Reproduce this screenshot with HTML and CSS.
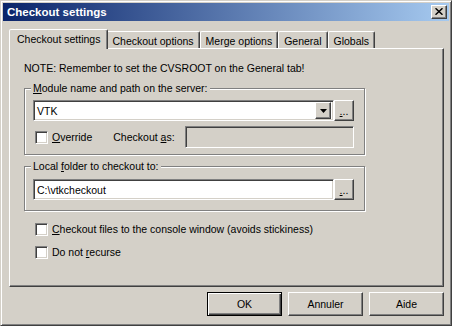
FILE: index.html
```html
<!DOCTYPE html>
<html>
<head>
<meta charset="utf-8">
<link rel="stylesheet" href="styles.css">
</head>
<body>
<div class="window">
  <div class="titlebar">
    <span class="title">Checkout settings</span>
    <span class="close btn-raised"><svg width="8" height="7" viewBox="0 0 8 7"><path d="M0.5 0.3 L7.5 6.7 M7.5 0.3 L0.5 6.7" stroke="#000" stroke-width="1.5"/></svg></span>
  </div>
  <div class="client">
    <div class="tabs">
      <div class="tab active">Checkout settings</div>
      <div class="tab">Checkout options</div>
      <div class="tab">Merge options</div>
      <div class="tab">General</div>
      <div class="tab">Globals</div>
    </div>
    <div class="panel">
      <p class="note">NOTE: Remember to set the CVSROOT on the General tab!</p>
      <div class="group group-module">
        <div class="legend"><u>M</u>odule name and path on the server:</div>
        <div class="row">
          <div class="combo sunken"><span class="value">VTK</span><span class="drop btn-raised"><svg width="7" height="4" viewBox="0 0 7 4"><path d="M0 0h7l-3.5 4z" fill="#000"/></svg></span></div>
          <span class="dots btn-raised"><u>.</u>..</span>
        </div>
        <div class="row row-override">
          <span class="check sunken"></span>
          <span class="check-label"><u>O</u>verride</span>
          <span class="as-label">Checkout <u>a</u>s:</span>
          <span class="edit sunken disabled"></span>
        </div>
      </div>
      <div class="group group-local">
        <div class="legend">Local <u>f</u>older to checkout to:</div>
        <div class="row">
          <div class="combo sunken"><span class="value">C:\vtkcheckout</span></div>
          <span class="dots btn-raised"><u>.</u>..</span>
        </div>
      </div>
      <div class="check-row first">
        <span class="check sunken"></span>
        <span class="check-label"><u>C</u>heckout files to the console window (avoids stickiness)</span>
      </div>
      <div class="check-row">
        <span class="check sunken"></span>
        <span class="check-label">Do not <u>r</u>ecurse</span>
      </div>
    </div>
    <div class="buttons">
      <span class="button default">OK</span>
      <span class="button">Annuler</span>
      <span class="button">Aide</span>
    </div>
  </div>
</div>
</body>
</html>
```

FILE: styles.css
```css
* { box-sizing: border-box; }
html, body { margin: 0; padding: 0; }
body {
  width: 452px;
  height: 326px;
  overflow: hidden;
  background: #D4D0C8;
  font-family: "Liberation Sans", Arial, sans-serif;
  font-size: 10.5px;
  line-height: 13px;
  color: #000;
}
u { text-decoration: underline; text-underline-offset: 1px; }

.window {
  width: 452px;
  height: 326px;
  display: flex;
  flex-direction: column;
  background: #D4D0C8;
  border: 1px solid;
  border-color: #D4D0C8 #404040 #404040 #D4D0C8;
  box-shadow: inset 1px 1px #fff, inset -1px -1px #808080;
  padding: 2px;
}

.titlebar {
  height: 18px;
  flex: none;
  display: flex;
  align-items: center;
  justify-content: space-between;
  background: linear-gradient(to right, #0A246A, #A6CAF0);
  padding: 0 2px;
}
.title {
  color: #fff;
  font-weight: bold;
  font-size: 11.5px;
  padding-left: 2px;
}

.btn-raised {
  background: #D4D0C8;
  border: 1px solid;
  border-color: #fff #404040 #404040 #fff;
  box-shadow: inset -1px -1px #808080;
}
.close {
  width: 16px;
  height: 14px;
  display: flex;
  align-items: center;
  justify-content: center;
  padding-bottom: 1px;
}
.close svg { display: block; }

.client {
  flex: 1;
  display: flex;
  flex-direction: column;
  padding: 8px 5px 7px 6px;
}

.tabs {
  display: flex;
  align-items: flex-end;
  height: 19px;
  flex: none;
  padding-left: 2px;
}
.tab {
  height: 17px;
  padding: 3px 5px 0;
  border: 1px solid;
  border-bottom: none;
  border-color: #fff #404040 transparent #fff;
  box-shadow: inset -1px 0 #808080;
  border-top-left-radius: 2px;
  border-top-right-radius: 2px;
  white-space: nowrap;
}
.tab.active {
  height: 20px;
  margin: 0 -2px -1px;
  padding: 3px 7px 0;
  position: relative;
  z-index: 1;
  background: #D4D0C8;
}

.panel {
  height: 239px;
  flex: none;
  border: 1px solid;
  border-color: #fff #404040 #404040 #fff;
  box-shadow: inset -1px -1px #808080;
  padding: 13px 0 0 14px;
}
.note { margin: 0; height: 13px; }

.group {
  width: 341px;
  border: 1px solid #808080;
  box-shadow: 1px 1px #fff, inset 1px 1px #fff;
  padding: 0 9px 6px 8px;
}
.group-module { margin-top: 13px; }
.group-local { margin-top: 11px; padding-bottom: 10px; }
.legend {
  width: fit-content;
  margin: -7px 0 0 -2px;
  padding: 0 2px;
  background: #D4D0C8;
  height: 13px;
}
.group-module .legend + .row { margin-top: 5px; }
.group-local .legend + .row { margin-top: 6px; }

.row { display: flex; align-items: center; }
.row-override { margin-top: 5px; }

.sunken {
  border: 1px solid;
  border-color: #808080 #fff #fff #808080;
  box-shadow: inset 1px 1px #404040, inset -1px -1px #D4D0C8;
}
.combo {
  width: 301px;
  height: 21px;
  background: #fff;
  display: flex;
  align-items: center;
  justify-content: space-between;
  padding: 2px 2px 2px 3px;
}
.combo .value { padding-top: 1px; }
.drop {
  width: 16px;
  height: 17px;
  display: flex;
  align-items: center;
  justify-content: center;
}
.drop svg { display: block; }
.dots {
  width: 20px;
  height: 21px;
  display: flex;
  justify-content: center;
  align-items: flex-end;
  padding-bottom: 3px;
  line-height: 11px;
}

.check {
  width: 13px;
  height: 13px;
  background: #fff;
  flex: none;
}
.row-override .check { margin-left: 2px; }
.check-label { margin-left: 4px; }
.as-label { margin-left: 21px; }
.edit {
  height: 22px;
  width: 169px;
  margin-left: auto;
}
.disabled { background: #D4D0C8; }
.group .row-override { width: 321px; }

.check-row {
  display: flex;
  align-items: center;
  height: 13px;
  padding-left: 11px;
  margin-top: 10px;
}
.check-row.first { margin-top: 12px; }

.buttons {
  display: flex;
  justify-content: flex-end;
  gap: 6px;
  margin-top: 5px;
}
.button {
  width: 75px;
  height: 24px;
  display: flex;
  align-items: center;
  justify-content: center;
  border: 1px solid;
  border-color: #fff #404040 #404040 #fff;
  box-shadow: inset -1px -1px #808080;
}
.button.default {
  border-color: #000;
  box-shadow: inset 1px 1px #fff, inset -1px -1px #404040, inset -2px -2px #808080;
}
```
